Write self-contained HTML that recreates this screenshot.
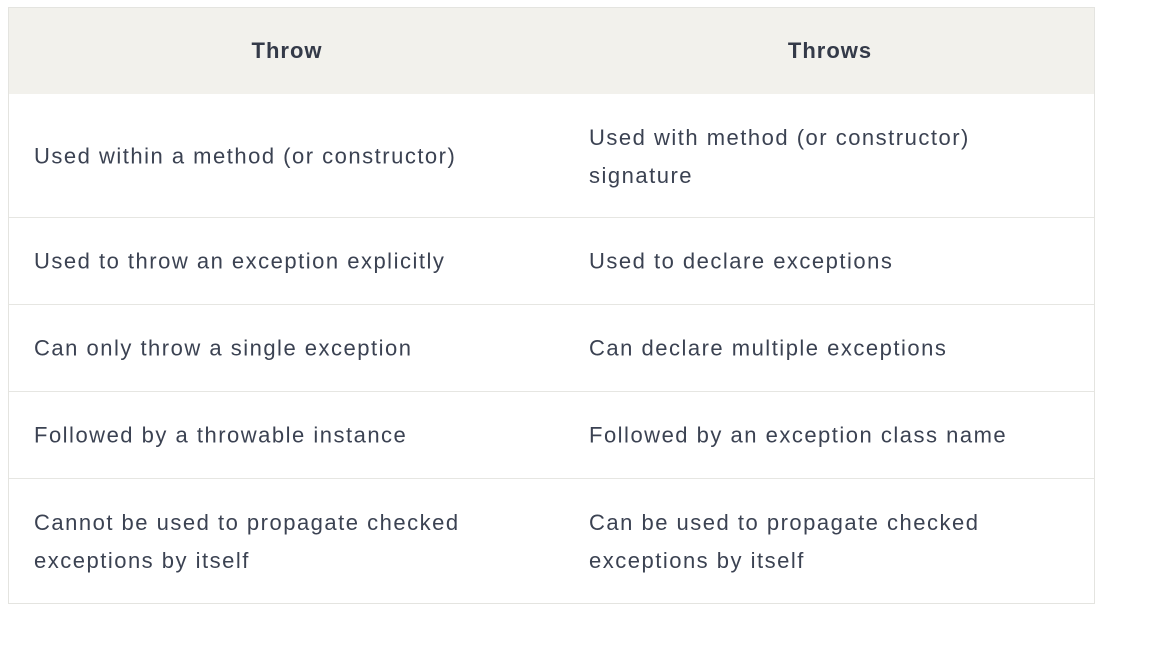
<!DOCTYPE html>
<html><head><style>
body{margin:0;background:#fff;width:1152px;height:648px;overflow:hidden;font-family:"Liberation Sans",sans-serif;}
.t{position:absolute;left:8px;top:7px;width:1087px;border:1px solid #e4e4e0;box-sizing:border-box;}
.h{height:86px;background:#f2f1ec;position:relative;}
.h div{position:absolute;top:30px;font-weight:bold;font-size:22px;letter-spacing:1px;color:#343a48;width:556px;text-align:center;}
.r{position:relative;border-top:1px solid #e6e6e2;color:#3b4252;font-size:22px;letter-spacing:1.5px;line-height:38px;}
.r div{position:absolute;top:50%;transform:translateY(-49%);width:520px;white-space:nowrap;}
.a{left:25px}.b{left:580px}
</style></head><body>
<div class="t">
<div class="h"><div style="left:0">Throw</div><div style="left:543px">Throws</div></div>
<div class="r" style="height:123px;border-top:none"><div class="a">Used within a method (or constructor)</div><div class="b">Used with method (or constructor)<br>signature</div></div>
<div class="r" style="height:86px"><div class="a">Used to throw an exception explicitly</div><div class="b">Used to declare exceptions</div></div>
<div class="r" style="height:86px"><div class="a">Can only throw a single exception</div><div class="b">Can declare multiple exceptions</div></div>
<div class="r" style="height:86px"><div class="a">Followed by a throwable instance</div><div class="b">Followed by an exception class name</div></div>
<div class="r" style="height:124px"><div class="a">Cannot be used to propagate checked<br>exceptions by itself</div><div class="b">Can be used to propagate checked<br>exceptions by itself</div></div>
</div>
</body></html>
